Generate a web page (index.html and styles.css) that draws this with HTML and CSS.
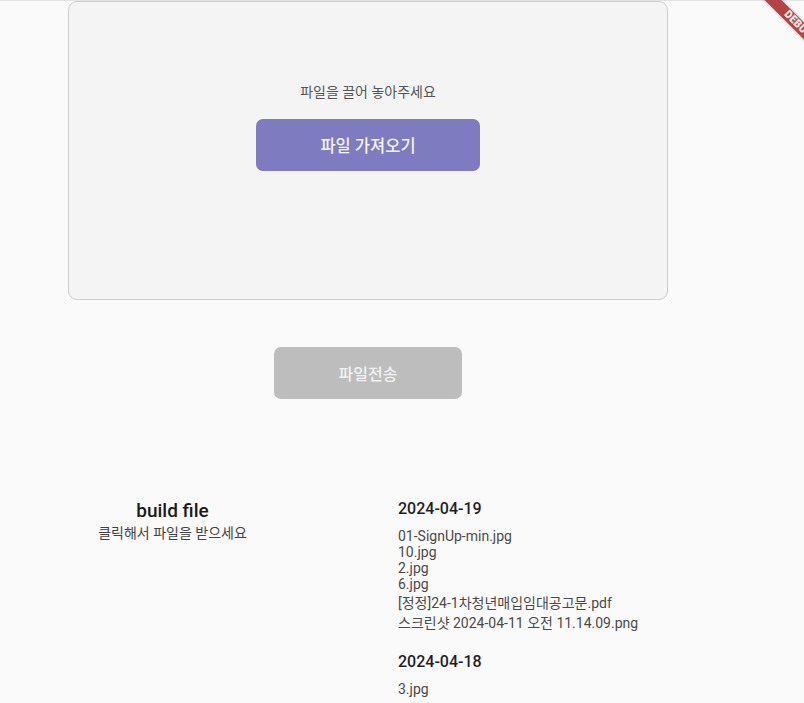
FILE: index.html
```html
<!DOCTYPE html>
<html lang="ko">
<head>
    <meta charset="UTF-8">
    <meta name="viewport" content="width=device-width, initial-scale=1.0">
    <title>파일 업로드</title>
    <link rel="stylesheet" href="styles.css">
</head>
<body>
    <!-- Upload area -->
    <main class="page">
        <div class="drop-zone">
            <p class="drop-hint">파일을 끌어 놓아주세요</p>
            <button class="pick-btn">파일 가져오기</button>
        </div>

        <button class="send-btn" disabled>파일전송</button>

        <!-- Build files list -->
        <section class="builds">
            <div class="builds-intro">
                <h2>build file</h2>
                <p>클릭해서 파일을 받으세요</p>
            </div>
            <div class="builds-list">
                <div class="day">
                    <h3>2024-04-19</h3>
                    <a href="#">01-SignUp-min.jpg</a>
                    <a href="#">10.jpg</a>
                    <a href="#">2.jpg</a>
                    <a href="#">6.jpg</a>
                    <a href="#">[정정]24-1차청년매입임대공고문.pdf</a>
                    <a href="#">스크린샷 2024-04-11 오전 11.14.09.png</a>
                </div>
                <div class="day">
                    <h3>2024-04-18</h3>
                    <a href="#">3.jpg</a>
                </div>
            </div>
        </section>
    </main>

    <!-- Debug ribbon -->
    <div class="debug-banner">DEBUG</div>
</body>
</html>
```

FILE: styles.css
```css
/* Base */
body {
    margin: 0;
    background-color: #fafafa;
    border-top: 1px solid #e4e4e4;
    font-family: Roboto, "Noto Sans CJK KR", sans-serif;
    color: #212121;
    overflow: hidden;
}

.page {
    width: 600px;
    margin-left: 68px;
    display: flex;
    flex-direction: column;
    align-items: center;
}

/* Drop zone */
.drop-zone {
    box-sizing: border-box;
    width: 600px;
    height: 299px;
    background-color: #f4f4f4;
    border: 1px solid #cccccc;
    border-radius: 9px;
    display: flex;
    flex-direction: column;
    align-items: center;
    padding-top: 79px;
}

.drop-hint {
    margin: 0;
    font-size: 14px;
    color: #555555;
}

.pick-btn {
    margin-top: 18px;
    width: 224px;
    height: 52px;
    border: none;
    border-radius: 7px;
    background-color: #7f7bc0;
    color: #f4f4fa;
    font-family: inherit;
    font-size: 16.5px;
    font-weight: 500;
}

/* Send button (disabled) */
.send-btn {
    margin-top: 47px;
    width: 188px;
    height: 52px;
    border: none;
    border-radius: 7px;
    background-color: #bdbdbd;
    color: #f2f2f2;
    font-family: inherit;
    font-size: 16px;
    font-weight: 500;
}

/* Build file list */
.builds {
    align-self: stretch;
    margin-top: 100px;
    display: flex;
}

.builds-intro {
    width: 209px;
    text-align: center;
}

.builds-intro h2 {
    margin: 0;
    font-size: 19px;
    font-weight: 500;
    color: #1a1a1a;
}

.builds-intro p {
    margin: 0;
    font-size: 14px;
    color: #444444;
}

.builds-list {
    margin-left: 121px;
    display: flex;
    flex-direction: column;
    gap: 20px;
}

.day {
    display: flex;
    flex-direction: column;
}

.day h3 {
    margin: 0 0 10px;
    font-size: 16px;
    font-weight: 500;
    color: #1f1f1f;
}

.day a {
    font-size: 14px;
    color: #4a4a4a;
    text-decoration: none;
}

/* Debug ribbon in the corner */
.debug-banner {
    position: fixed;
    top: 19px;
    left: 738px;
    width: 120px;
    height: 12px;
    line-height: 12px;
    transform: rotate(45deg);
    background-color: #b24444;
    box-shadow: 0 0 3px rgba(0, 0, 0, 0.25);
    color: #ffffff;
    font-family: Roboto, sans-serif;
    font-size: 10px;
    font-weight: 900;
    text-align: center;
    letter-spacing: 0.5px;
}
```
